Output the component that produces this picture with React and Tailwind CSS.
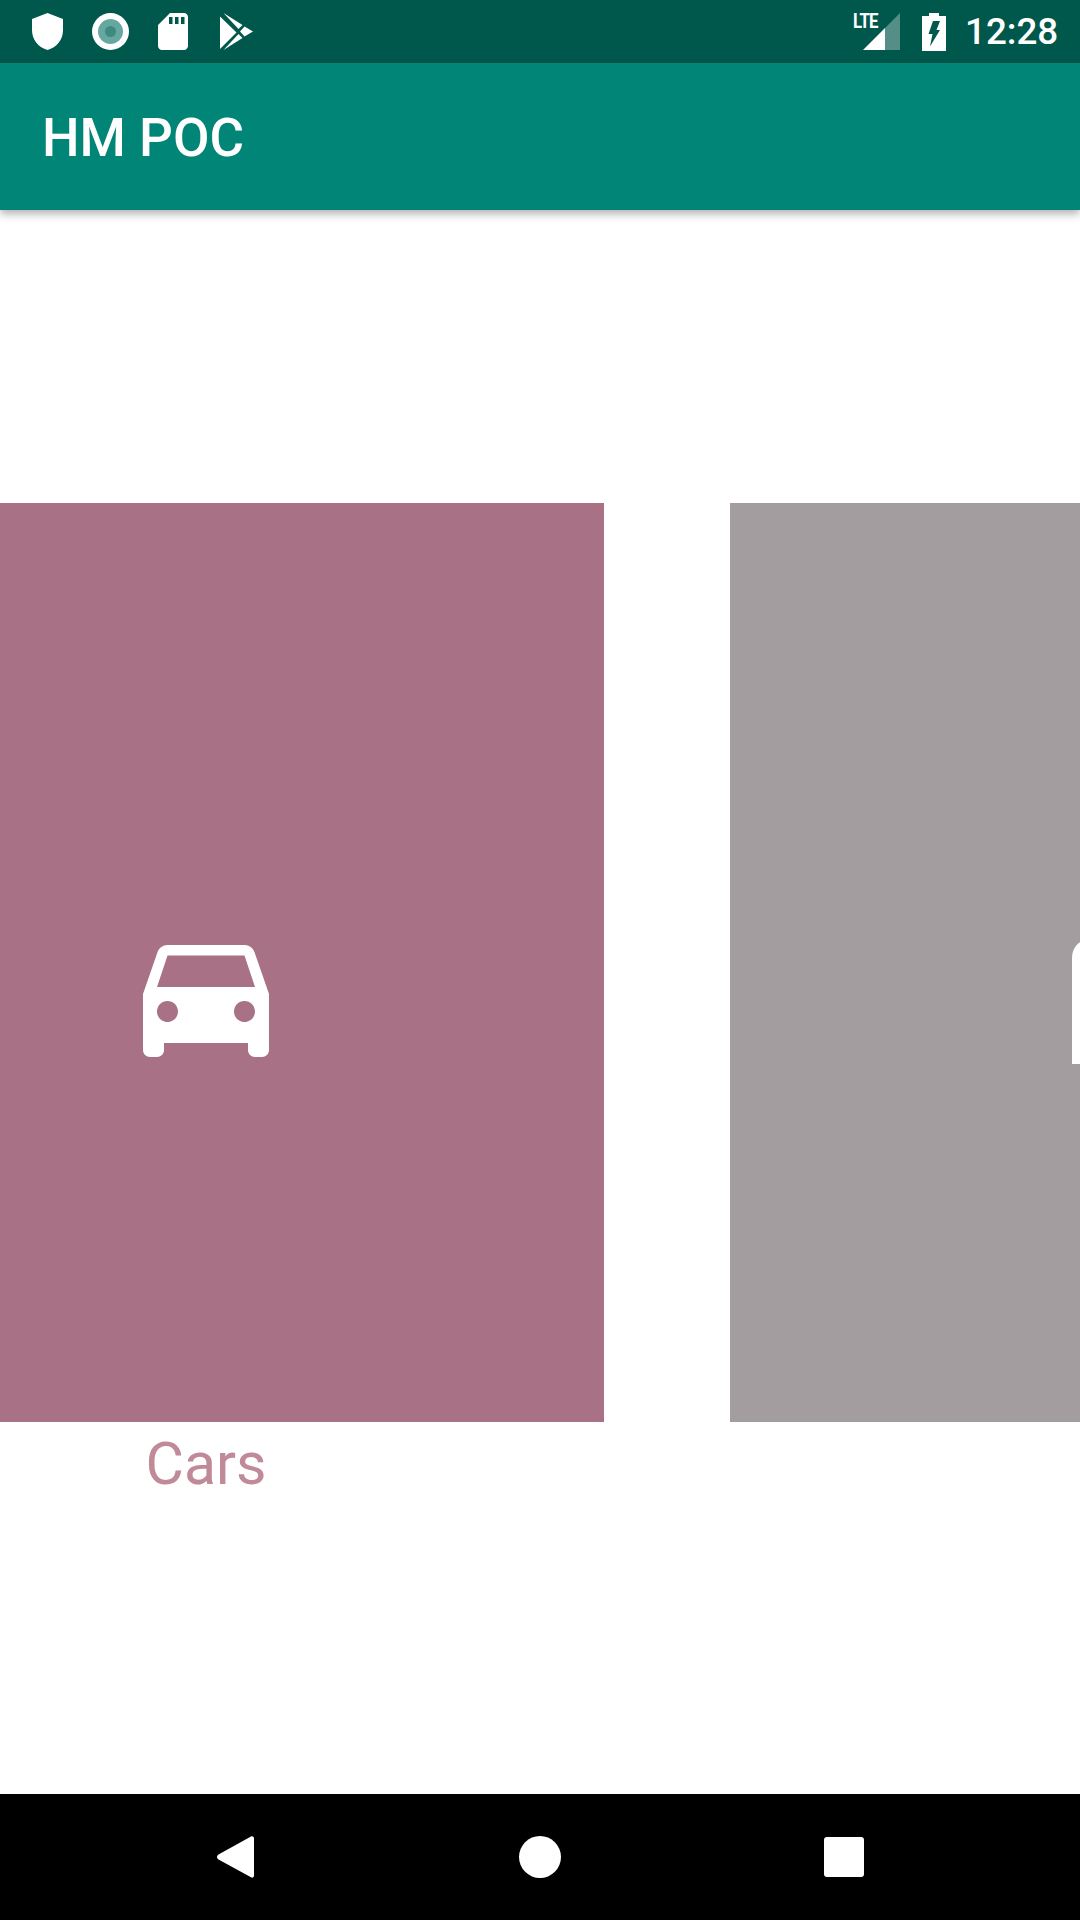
export default function App() {
  return (
    <div className="w-[1080px] h-[1920px] flex flex-col bg-white overflow-hidden font-['Roboto',sans-serif]">
      {/* Status bar */}
      <div className="h-[63px] shrink-0 bg-[#00574b] flex items-center text-white">
        <svg className="ml-[32px] block" width="31" height="37" viewBox="0 0 31 37">
          <path d="M15.5 0 L31 6 V17 C31 27 24.5 34.5 15.5 37 C6.5 34.5 0 27 0 17 V6 Z" fill="#fff" />
        </svg>
        <svg className="ml-[29px] block" width="37" height="37" viewBox="0 0 37 37">
          <circle cx="18.5" cy="18.5" r="18.5" fill="#fff" />
          <circle cx="18.5" cy="18.5" r="12.5" fill="#66a89f" />
          <circle cx="18.5" cy="18.5" r="5.5" fill="#3d8a7e" />
        </svg>
        <svg className="ml-[29px] block" width="30" height="37" viewBox="0 0 30 37">
          <path fillRule="evenodd" d="M12 0 H26 C28.2 0 30 1.8 30 4 V33 C30 35.2 28.2 37 26 37 H4 C1.8 37 0 35.2 0 33 V12 Z M11 4 V11 H14.5 V4 Z M17 4 V11 H20.5 V4 Z M23 4 V11 H26.5 V4 Z" fill="#fff" />
        </svg>
        <svg className="ml-[32px] block" width="34" height="37" viewBox="0 0 34 37">
          <path d="M0 3.5 V36 L16.5 19.5 Z" fill="#fff" />
          <path d="M3.5 0 L22.5 12 L18.5 16 Z" fill="#fff" />
          <path d="M3.5 37 L22.5 25 L18.5 21 Z" fill="#fff" />
          <path d="M24.5 13.5 L33 18.5 L24.5 23.5 L20 18.5 Z" fill="#fff" />
        </svg>
        <div className="relative ml-[599px] w-[47px] h-[37px]">
          <span className="absolute left-0 top-[0px] text-[21px] leading-[17px] font-bold tracking-[-1px] scale-x-[0.8] origin-left">LTE</span>
          <svg className="absolute left-[10px] top-0 block" width="37" height="37" viewBox="0 0 37 37">
            <path d="M37 0 V37 H22 V15 Z" fill="#fff" fillOpacity="0.33" />
            <path d="M22 15 V37 H0 Z" fill="#fff" />
          </svg>
        </div>
        <svg className="ml-[22px] block" width="24" height="38" viewBox="0 0 24 38">
          <path fillRule="evenodd" d="M7 0 H17 V3 H24 V38 H0 V3 H7 Z M11 8 H18 L14.5 17 H18 L8 33.5 L10.5 21 H6.5 Z" fill="#fff" />
        </svg>
        <span className="ml-[19px] mt-[2px] text-[36.75px] leading-none font-medium">12:28</span>
      </div>

      {/* App bar */}
      <div className="h-[147px] shrink-0 bg-[#008577] flex items-center pl-[42px] shadow-[0_4px_8px_rgba(0,0,0,0.3)] relative z-10">
        <span className="mt-[4px] text-white text-[53px] leading-none font-medium">HM POC</span>
      </div>

      {/* Pager */}
      <div className="flex-1 overflow-hidden pt-[293px]">
        <div className="flex gap-[126px] ml-[-192px]">
          <div className="w-[796px] shrink-0 flex flex-col items-center">
            <div className="w-full h-[919px] bg-[#a87186] flex justify-center pt-[407px]">
              <svg className="block" width="168" height="168" viewBox="0 0 24 24">
                <path fill="#fff" d="M18.92 6.01C18.72 5.42 18.16 5 17.5 5h-11c-.66 0-1.21.42-1.42 1.01L3 12v8c0 .55.45 1 1 1h1c.55 0 1-.45 1-1v-1h12v1c0 .55.45 1 1 1h1c.55 0 1-.45 1-1v-8l-2.08-5.99zM6.5 16c-.83 0-1.5-.67-1.5-1.5S5.67 13 6.5 13s1.5.67 1.5 1.5S7.33 16 6.5 16zm11 0c-.83 0-1.5-.67-1.5-1.5s.67-1.5 1.5-1.5 1.5.67 1.5 1.5-.67 1.5-1.5 1.5zM5 11l1.5-4.5h11L19 11H5z" />
              </svg>
            </div>
            <span className="mt-[8px] text-[#c08a99] text-[59px] leading-[68px]">Cars</span>
          </div>
          <div className="w-[796px] shrink-0">
            <div className="w-full h-[919px] bg-[#a49d9f] pt-[437px] pl-[342px]">
              <svg className="block" width="60" height="124" viewBox="0 0 60 124">
                <path d="M0 124 V18 C0 8 7 0 16 0 H60 V124 Z" fill="#fff" />
              </svg>
            </div>
          </div>
        </div>
      </div>

      {/* Navigation bar */}
      <div className="h-[126px] shrink-0 bg-black flex items-center relative">
        <svg className="ml-[217px] block" width="37" height="42" viewBox="0 0 37 42">
          <path d="M34 0.5 C35.8 -0.3 37 0.8 37 2.5 V39.5 C37 41.2 35.6 42.3 34 41.3 L1.5 23.5 C-0.5 22.2 -0.5 19.8 1.5 18.5 Z" fill="#fff" />
        </svg>
        <div className="ml-[265px] w-[42px] h-[42px] rounded-full bg-white" />
        <div className="ml-[263px] w-[40px] h-[40px] rounded-[3px] bg-white" />
      </div>
    </div>
  );
}
